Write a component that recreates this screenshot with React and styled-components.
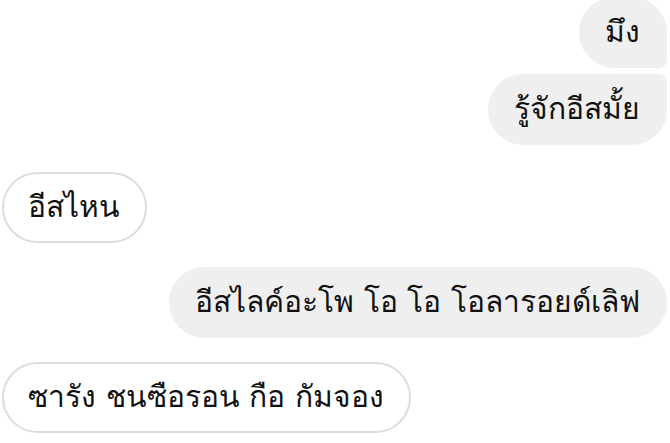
import styled, { createGlobalStyle } from "styled-components";

const GlobalStyle = createGlobalStyle`
  html, body {
    margin: 0;
    padding: 0;
    background: #ffffff;
    overflow: hidden;
  }
`;

const Chat = styled.div`
  width: 670px;
  height: 443px;
  display: flex;
  flex-direction: column;
  padding: 0 3px 0 2px;
  box-sizing: border-box;
  font-family: "DejaVu Sans", sans-serif;
  overflow: hidden;
`;

const Row = styled.div`
  display: flex;
  justify-content: ${(p) => (p.$mine ? "flex-end" : "flex-start")};
  margin-top: ${(p) => p.$gap}px;
`;

const Bubble = styled.div`
  height: 71px;
  box-sizing: border-box;
  display: flex;
  align-items: center;
  padding: 0 25px 2px 24px;
  font-size: 30px;
  color: #111111;
  white-space: nowrap;
  border-radius: 36px;
  background: ${(p) => (p.$mine ? "#efefef" : "#ffffff")};
  border: 2px solid ${(p) => (p.$mine ? "#efefef" : "#dcdcdc")};
  ${(p) => p.$top && "border-top-right-radius: 8px;"}
  ${(p) => p.$bottom && "border-bottom-right-radius: 8px;"}
`;

const messages = [
  { text: "มึง", mine: true, gap: -3, bottom: true },
  { text: "รู้จักอีสมั้ย", mine: true, gap: 6, top: true },
  { text: "อีสไหน", mine: false, gap: 27 },
  { text: "อีสไลค์อะโพ โอ โอ โอลารอยด์เลิฟ", mine: true, gap: 24 },
  { text: "ซารัง ชนซือรอน กือ กัมจอง", mine: false, gap: 24 },
];

export default function App() {
  return (
    <>
      <GlobalStyle />
      <Chat>
        {messages.map((m, i) => (
          <Row key={i} $mine={m.mine} $gap={m.gap}>
            <Bubble $mine={m.mine} $top={m.top} $bottom={m.bottom}>
              {m.text}
            </Bubble>
          </Row>
        ))}
      </Chat>
    </>
  );
}
